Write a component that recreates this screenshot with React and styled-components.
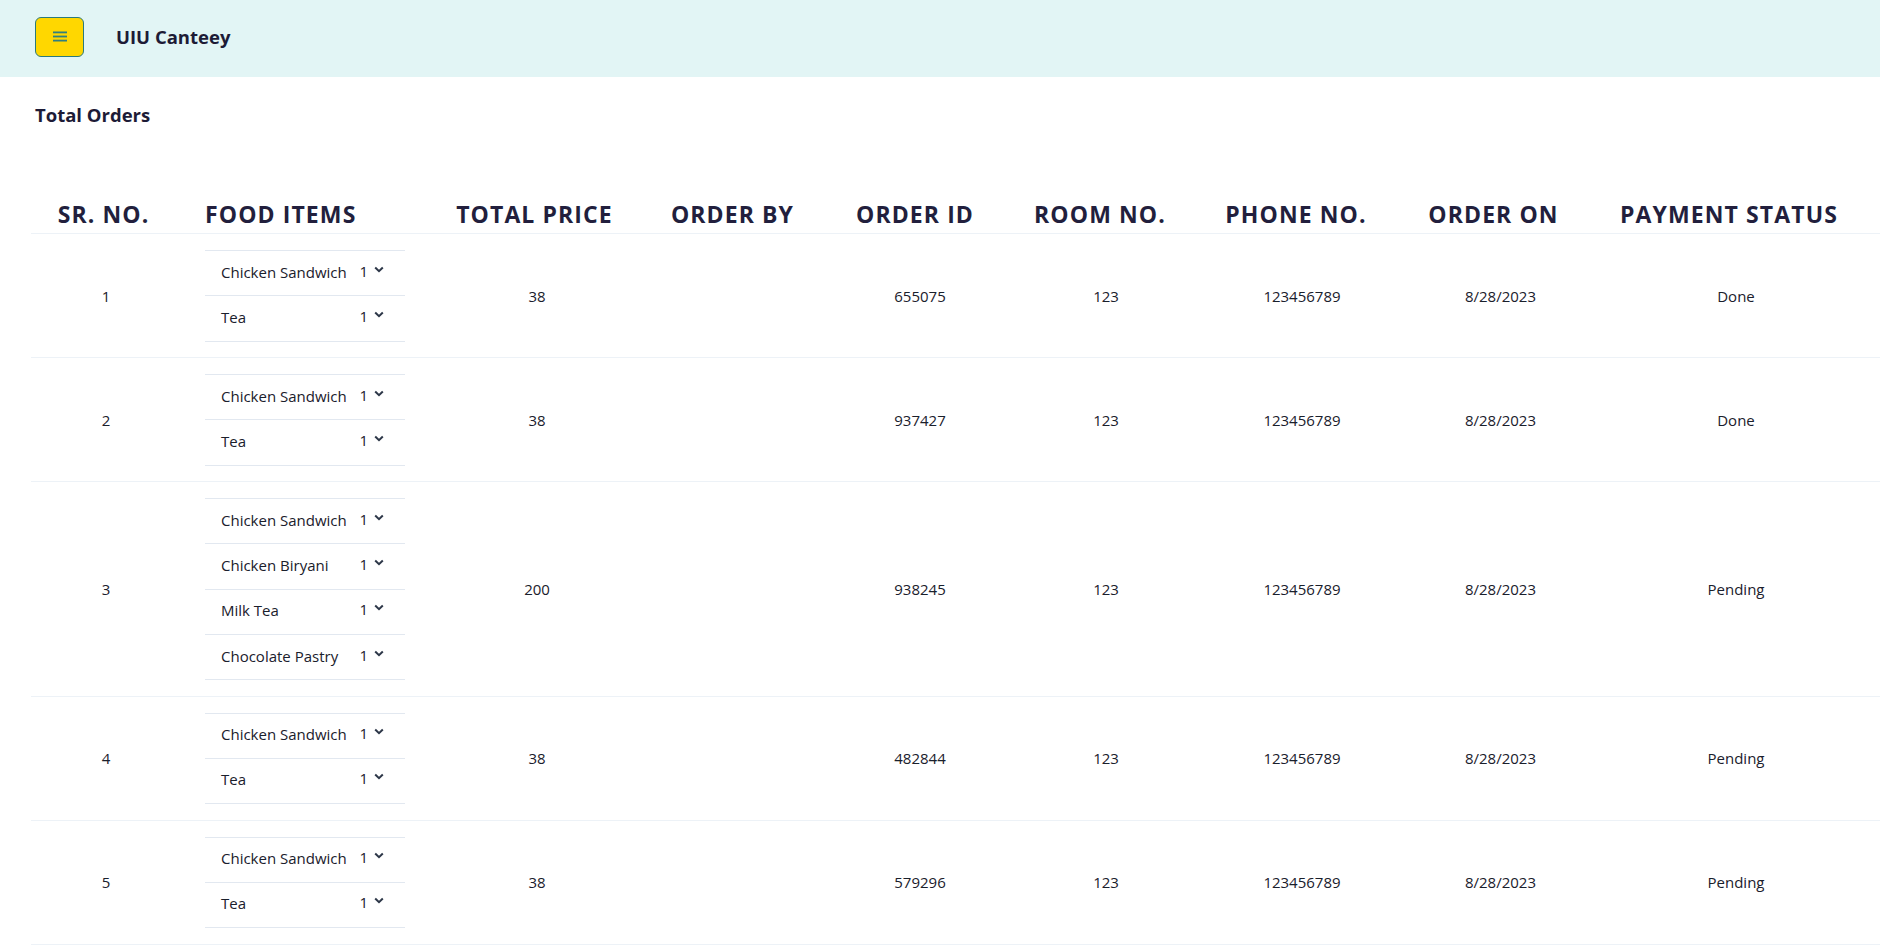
import React from 'react';
import styled, { createGlobalStyle } from 'styled-components';

const GlobalStyle = createGlobalStyle`
  body {
    margin: 0;
    background: #fff;
    font-family: "Open Sans", "Noto Sans", sans-serif;
    color: #1a202c;
    overflow-x: hidden;
  }
`;

const Navbar = styled.header`
  display: flex;
  align-items: center;
  height: 77px;
  padding: 0 35px;
  background-color: #e2f5f5;
  box-sizing: border-box;
`;

const MenuButton = styled.button`
  display: flex;
  align-items: center;
  justify-content: center;
  width: 49px;
  height: 40px;
  margin-top: -4px;
  padding: 0;
  background: #ffd700;
  border: 1px solid #2c7a7b;
  border-radius: 6px;
  cursor: pointer;
`;

const Brand = styled.h1`
  margin: -4px 0 0 32px;
  font-size: 18.5px;
  font-weight: 700;
  color: #1d1b36;
`;

const Main = styled.main`
  padding-left: 31px;
`;

const Title = styled.h2`
  margin: 0;
  padding: 24px 0 0 4px;
  font-size: 18.5px;
  font-weight: 700;
  line-height: 28px;
  color: #1d1b36;
`;

const Table = styled.table`
  width: 1849px;
  margin-top: 69px;
  border-collapse: collapse;
  table-layout: fixed;
`;

const Col = styled.col`
  width: ${p => p.$w}px;
`;

const Th = styled.th`
  padding: 0 ${p => (p.$last ? '12px' : '0')} 3px ${p => (p.$left ? '29px' : '0')};
  text-align: ${p => (p.$left ? 'left' : 'center')};
  font-size: 23px;
  font-weight: 700;
  letter-spacing: 1.1px;
  line-height: 32px;
  text-transform: uppercase;
  white-space: nowrap;
  color: #221f3d;
  border-bottom: 1px solid #edf2f7;
`;

const Row = styled.tr`
  border-bottom: 1px solid #edf2f7;
`;

// $shift nudges the centred value a little to the right, as in the design
const Td = styled.td`
  padding: 16px ${p => (p.$last ? '12px' : '0')} 15.4px ${p => (p.$items ? 29 : p.$shift || 0)}px;
  text-align: ${p => (p.$items ? 'left' : 'center')};
  vertical-align: middle;
  font-size: 15px;
  color: #1a202c;
`;

const ItemList = styled.div`
  width: 200px;
  border-top: 1px solid #e2e8f0;
`;

const Item = styled.div`
  display: flex;
  align-items: center;
  box-sizing: border-box;
  height: 45.3px;
  padding: 0 21px 3px 16px;
  border-bottom: 1px solid #e2e8f0;
  font-size: 15px;
`;

const ItemName = styled.span`
  flex: 1;
`;

const Qty = styled.span`
  display: flex;
  align-items: center;
  gap: 6px;
  margin-top: -2px;
`;

const Chevron = () => (
  <svg width="10" height="7" viewBox="0 0 10 7" style={{ marginTop: -3 }}>
    <path d="M1.2 1.5L5 5.2l3.8-3.7" fill="none" stroke="#2d3748" strokeWidth="2" />
  </svg>
);

const MenuIcon = () => (
  <svg width="14" height="11" viewBox="0 0 14 11">
    <rect x="0" y="0.5" width="14" height="1.8" fill="#2f7f80" />
    <rect x="0" y="4.6" width="14" height="1.8" fill="#2f7f80" />
    <rect x="0" y="8.7" width="14" height="1.8" fill="#2f7f80" />
  </svg>
);

const pair = [['Chicken Sandwich', 1], ['Tea', 1]];

const orders = [
  { id: 655075, items: pair, total: 38, status: 'Done' },
  { id: 937427, items: pair, total: 38, status: 'Done' },
  {
    id: 938245,
    items: [['Chicken Sandwich', 1], ['Chicken Biryani', 1], ['Milk Tea', 1], ['Chocolate Pastry', 1]],
    total: 200,
    status: 'Pending',
  },
  { id: 482844, items: pair, total: 38, status: 'Pending' },
  { id: 579296, items: pair, total: 38, status: 'Pending' },
];

const widths = [145, 253, 211, 185, 180, 190, 202, 193, 290];
const heads = ['Sr. No.', 'Food Items', 'Total Price', 'Order By', 'Order ID', 'Room No.', 'Phone No.', 'Order On', 'Payment Status'];

export default function App() {
  return (
    <>
      <GlobalStyle />
      <Navbar>
        <MenuButton aria-label="menu">
          <MenuIcon />
        </MenuButton>
        <Brand>UIU Canteey</Brand>
      </Navbar>
      <Main>
        <Title>Total Orders</Title>
        <Table>
          <colgroup>
            {widths.map((w, i) => <Col key={i} $w={w} />)}
          </colgroup>
          <thead>
            <tr>
              {heads.map((h, i) => (
                <Th key={h} $left={i === 1} $last={i === heads.length - 1}>{h}</Th>
              ))}
            </tr>
          </thead>
          <tbody>
            {orders.map((o, idx) => (
              <Row key={o.id}>
                <Td $shift={5}>{idx + 1}</Td>
                <Td $items>
                  <ItemList>
                    {o.items.map(([name, q]) => (
                      <Item key={name}>
                        <ItemName>{name}</ItemName>
                        <Qty>{q}<Chevron /></Qty>
                      </Item>
                    ))}
                  </ItemList>
                </Td>
                <Td $shift={5}>{o.total}</Td>
                <Td></Td>
                <Td $shift={10}>{o.id}</Td>
                <Td $shift={12}>123</Td>
                <Td $shift={12}>123456789</Td>
                <Td $shift={14}>8/28/2023</Td>
                <Td $last $shift={14}>{o.status}</Td>
              </Row>
            ))}
          </tbody>
        </Table>
      </Main>
    </>
  );
}
